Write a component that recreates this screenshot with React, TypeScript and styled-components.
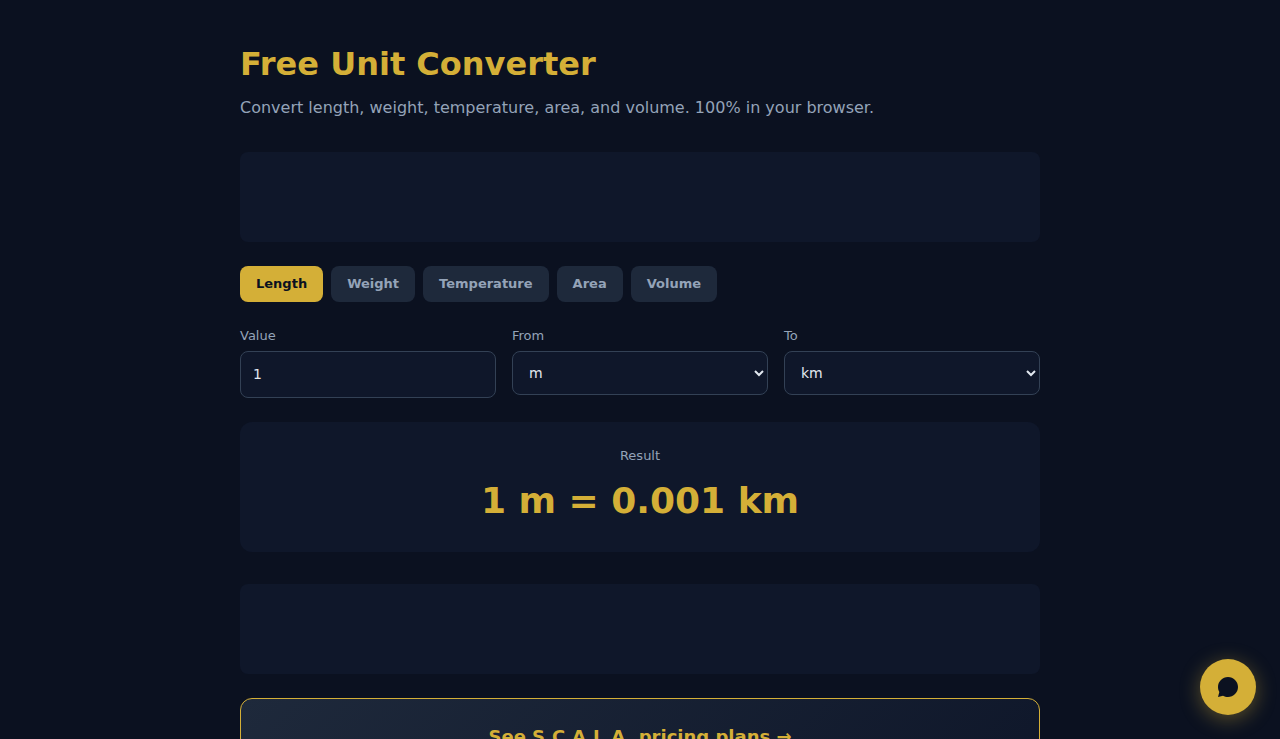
import React, { useState } from "react";
import styled, { createGlobalStyle } from "styled-components";

const GlobalStyle = createGlobalStyle`
  * { box-sizing: border-box; }
  body {
    margin: 0;
    background: #0b1120;
    color: #e2e8f0;
    font-family: "DejaVu Sans", sans-serif;
    font-size: 16px;
    line-height: 24px;
  }
`;

const Page = styled.main`
  max-width: 848px;
  margin: 0 auto;
  padding: 40px 24px;
`;

const Title = styled.h1`
  margin: 0 0 8px;
  color: #d4af37;
  font-size: 32px;
  line-height: 48px;
  font-weight: 700;
`;

const Subtitle = styled.p`
  margin: 0 0 32px;
  color: #94a3b8;
`;

const AdSlot = styled.aside`
  height: 90px;
  margin-bottom: 24px;
  border-radius: 8px;
  background: #0f172a;
`;

const Tabs = styled.div`
  display: flex;
  flex-wrap: wrap;
  gap: 8px;
  margin-bottom: 24px;
`;

const Tab = styled.button<{ $active: boolean }>`
  padding: 10px 16px;
  border: 0;
  border-radius: 8px;
  background: ${(p) => (p.$active ? "#d4af37" : "#1e293b")};
  color: ${(p) => (p.$active ? "#0b1120" : "#94a3b8")};
  font-family: inherit;
  font-size: 13px;
  font-weight: 600;
  line-height: 16px;
  cursor: pointer;
`;

const Fields = styled.div`
  display: grid;
  grid-template-columns: repeat(3, minmax(0, 1fr));
  align-items: start;
  gap: 16px;
  margin-bottom: 24px;
`;

const Field = styled.div`
  display: flex;
  flex-direction: column;
  gap: 6px;
`;

const Label = styled.label`
  color: #94a3b8;
  font-size: 13px;
  line-height: 19px;
`;

const controlStyle = `
  width: 100%;
  border: 1px solid #334155;
  border-radius: 8px;
  background: #0f172a;
  color: #e2e8f0;
  font-family: inherit;
  font-size: 14px;
`;

const NumberInput = styled.input`
  ${controlStyle}
  height: 47px;
  padding: 12px 12px 14px;
`;

const UnitSelect = styled.select`
  ${controlStyle}
  height: 44px;
  padding: 12px;
`;

const ResultCard = styled.section`
  margin-bottom: 32px;
  padding: 24px;
  border-radius: 12px;
  background: #0f172a;
  text-align: center;
`;

const ResultLabel = styled.div`
  margin-bottom: 8px;
  color: #94a3b8;
  font-size: 13px;
  line-height: 20px;
`;

const ResultValue = styled.output`
  display: block;
  color: #d4af37;
  font-size: 36px;
  line-height: 54px;
  font-weight: 700;
`;

const PricingLink = styled.a`
  display: block;
  padding: 24px;
  border: 1px solid #d4af37;
  border-radius: 12px;
  background: linear-gradient(135deg, #1e293b, #0f172a);
  color: #d4af37;
  font-size: 18px;
  line-height: 28px;
  font-weight: 700;
  text-align: center;
  text-decoration: none;
`;

const ChatButton = styled.button`
  position: fixed;
  right: 24px;
  bottom: 24px;
  display: flex;
  align-items: center;
  justify-content: center;
  width: 56px;
  height: 56px;
  padding: 0;
  border: 0;
  border-radius: 50%;
  background: #d4af37;
  color: #0b1120;
  box-shadow: 0 4px 20px rgba(212, 175, 55, 0.4);
  cursor: pointer;
`;

const categories: Record<string, Record<string, number>> = {
  Length: { m: 1, km: 1000, cm: 0.01, mm: 0.001, mi: 1609.344, ft: 0.3048, in: 0.0254 },
  Weight: { kg: 1, g: 0.001, lb: 0.45359237, oz: 0.028349523 },
  Temperature: { "°C": 1, "°F": 1, K: 1 },
  Area: { "m²": 1, "km²": 1000000, ha: 10000, "ft²": 0.09290304 },
  Volume: { L: 1, mL: 0.001, "m³": 1000, gal: 3.785411784 },
};

function convertTemperature(value: number, from: string, to: string) {
  const c = from === "°F" ? ((value - 32) * 5) / 9 : from === "K" ? value - 273.15 : value;
  return to === "°F" ? (c * 9) / 5 + 32 : to === "K" ? c + 273.15 : c;
}

export default function App() {
  const [category, setCategory] = useState("Length");
  const [value, setValue] = useState("1");
  const [from, setFrom] = useState("m");
  const [to, setTo] = useState("km");

  const units = categories[category];
  const names = Object.keys(units);
  const amount = Number(value);
  const converted =
    category === "Temperature"
      ? convertTemperature(amount, from, to)
      : (amount * units[from]) / units[to];

  const selectCategory = (name: string) => {
    const [first, second] = Object.keys(categories[name]);
    setCategory(name);
    setFrom(first);
    setTo(second);
  };

  return (
    <>
      <GlobalStyle />
      <Page>
        <Title>Free Unit Converter</Title>
        <Subtitle>
          Convert length, weight, temperature, area, and volume. 100% in your browser.
        </Subtitle>
        <AdSlot />
        <Tabs>
          {Object.keys(categories).map((name) => (
            <Tab
              key={name}
              type="button"
              $active={name === category}
              aria-pressed={name === category}
              onClick={() => selectCategory(name)}
            >
              {name}
            </Tab>
          ))}
        </Tabs>
        <Fields>
          <Field>
            <Label htmlFor="value">Value</Label>
            <NumberInput
              id="value"
              type="number"
              value={value}
              onChange={(e) => setValue(e.target.value)}
            />
          </Field>
          <Field>
            <Label htmlFor="from">From</Label>
            <UnitSelect id="from" value={from} onChange={(e) => setFrom(e.target.value)}>
              {names.map((n) => (
                <option key={n}>{n}</option>
              ))}
            </UnitSelect>
          </Field>
          <Field>
            <Label htmlFor="to">To</Label>
            <UnitSelect id="to" value={to} onChange={(e) => setTo(e.target.value)}>
              {names.map((n) => (
                <option key={n}>{n}</option>
              ))}
            </UnitSelect>
          </Field>
        </Fields>
        <ResultCard>
          <ResultLabel>Result</ResultLabel>
          <ResultValue htmlFor="value from to">
            {`${amount} ${from} = ${Number(converted.toPrecision(8))} ${to}`}
          </ResultValue>
        </ResultCard>
        <AdSlot />
        <PricingLink href="#pricing">See S.C.A.L.A. pricing plans →</PricingLink>
      </Page>
      <ChatButton type="button" aria-label="Open chat">
        <svg width="24" height="24" viewBox="0 0 24 24" fill="currentColor" aria-hidden="true">
          <path d="M12 2C6.48 2 2 6.48 2 12c0 1.82.49 3.53 1.34 5L2 22l5-1.34C8.47 21.51 10.18 22 12 22c5.52 0 10-4.48 10-10S17.52 2 12 2z" />
        </svg>
      </ChatButton>
    </>
  );
}
